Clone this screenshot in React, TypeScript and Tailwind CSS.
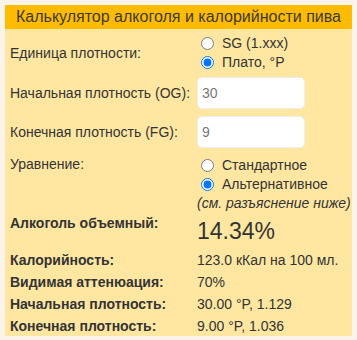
import { useState } from 'react'

const font = { fontFamily: '"Liberation Sans", Arial, sans-serif' }

function Radio({ name, label, checked, onChange }: { name: string; label: string; checked: boolean; onChange: () => void }) {
  return (
    <label className="flex h-[19px] items-center">
      <input
        type="radio"
        name={name}
        checked={checked}
        onChange={onChange}
        className="ml-[4px] mr-[8px] h-[13px] w-[13px] accent-[#0075ff]"
      />
      {label}
    </label>
  )
}

function ResultRow({ label, value }: { label: string; value: string }) {
  return (
    <div className="flex h-[22px] items-center">
      <div className="w-[192px] pl-[5px] font-bold">{label}</div>
      <div>{value}</div>
    </div>
  )
}

export default function App() {
  const [unit, setUnit] = useState<'sg' | 'plato'>('plato')
  const [formula, setFormula] = useState<'std' | 'alt'>('alt')
  const [og, setOg] = useState('30')
  const [fg, setFg] = useState('9')

  return (
    <div className="h-[340px] w-[357px] bg-[#fcf3ea] p-[5px]" style={font}>
      <div className="h-[331px] w-[347px] bg-[#ffe7a2] text-[14px] text-[#333]">
        {/* Header */}
        <div className="flex h-[24px] items-center justify-center bg-[#ffbb00] text-[16px] text-[#3a3a3a]">
          Калькулятор алкоголя и калорийности пива
        </div>

        {/* Unit */}
        <div className="mt-[5px] flex h-[38px] items-center">
          <div className="w-[192px] pl-[5px]">Единица плотности:</div>
          <div className="flex flex-col">
            <Radio name="unit" label="SG (1.xxx)" checked={unit === 'sg'} onChange={() => setUnit('sg')} />
            <Radio name="unit" label="Плато, °P" checked={unit === 'plato'} onChange={() => setUnit('plato')} />
          </div>
        </div>

        {/* OG */}
        <div className="mt-[5px] flex h-[32px] items-center">
          <div className="w-[192px] pl-[5px]">Начальная плотность (OG):</div>
          <input
            value={og}
            onChange={e => setOg(e.target.value)}
            className="h-[32px] w-[108px] rounded-[5px] border border-[#eee] bg-white px-[4px] text-[14px] text-[#777] outline-none"
          />
        </div>

        {/* FG */}
        <div className="mt-[7px] flex h-[32px] items-center">
          <div className="w-[192px] pl-[5px]">Конечная плотность (FG):</div>
          <input
            value={fg}
            onChange={e => setFg(e.target.value)}
            className="h-[32px] w-[108px] rounded-[5px] border border-[#eee] bg-white px-[4px] text-[14px] text-[#777] outline-none"
          />
        </div>

        {/* Formula */}
        <div className="mt-[6px] flex">
          <div className="w-[192px] pl-[5px] pt-[1px] leading-[19px]">Уравнение:</div>
          <div className="flex flex-col pt-[2px]">
            <Radio name="formula" label="Стандартное" checked={formula === 'std'} onChange={() => setFormula('std')} />
            <Radio name="formula" label="Альтернативное" checked={formula === 'alt'} onChange={() => setFormula('alt')} />
            <div className="h-[18px] italic leading-[18px]">(см. разъяснение ниже)</div>
          </div>
        </div>

        {/* Results */}
        <div className="mt-[2px] flex h-[35px] items-start">
          <div className="w-[192px] pl-[5px] pt-[1px] font-bold leading-[16px]">Алкоголь объемный:</div>
          <div className="pt-[4px] text-[23px] leading-[26px]">14.34%</div>
        </div>
        <ResultRow label="Калорийность:" value="123.0 кКал на 100 мл." />
        <ResultRow label="Видимая аттенюация:" value="70%" />
        <ResultRow label="Начальная плотность:" value="30.00 °P, 1.129" />
        <ResultRow label="Конечная плотность:" value="9.00 °P, 1.036" />
      </div>
    </div>
  )
}
